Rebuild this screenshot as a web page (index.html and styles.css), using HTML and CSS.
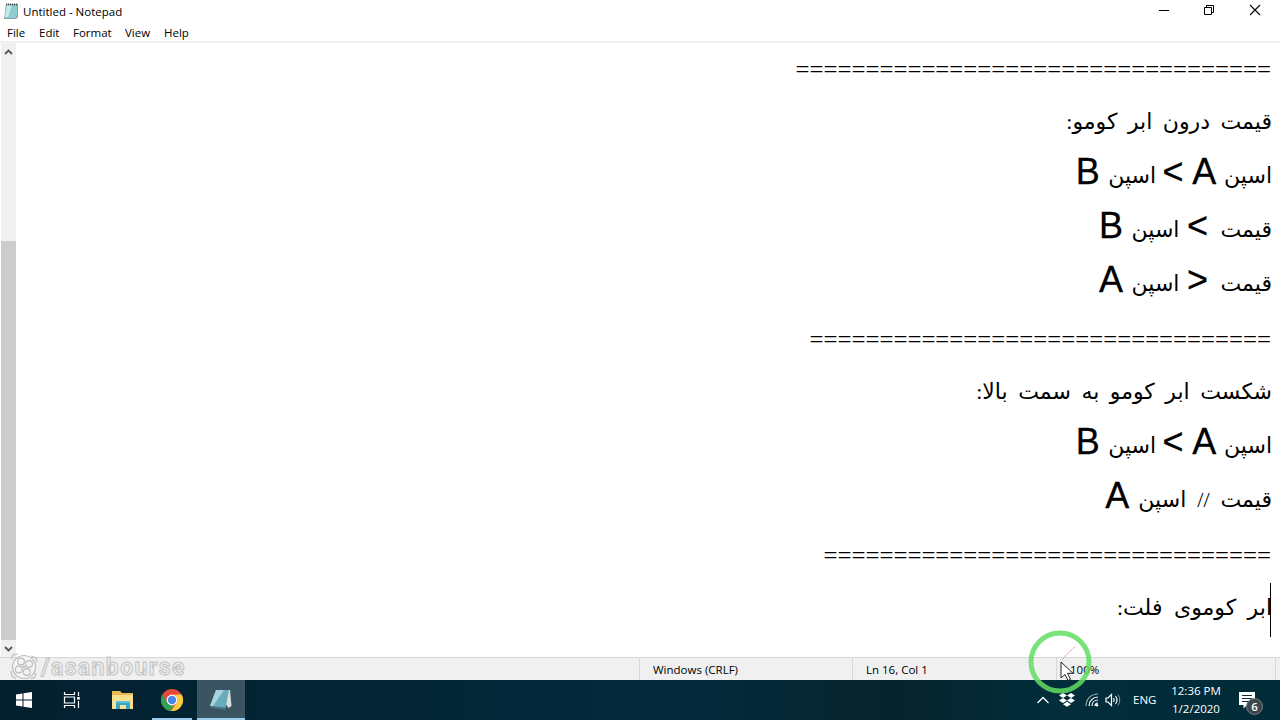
FILE: index.html
```html
<!DOCTYPE html>
<html lang="en">
<head>
    <meta charset="UTF-8">
    <meta name="viewport" content="width=device-width, initial-scale=1.0">
    <title>Untitled - Notepad</title>
    <link rel="stylesheet" href="styles.css">
</head>
<body>
    <div class="window">
        <div class="titlebar">
            <svg class="app-icon" width="16" height="18" viewBox="0 0 16 18">
                <path d="M3 2h12v13l-2 2H1z" fill="#8a9ea3"/>
                <path d="M3.500 3h10.500v11l-1.500 2H1.500z" fill="#8fcdd3"/>
                <path d="M4 3h5L5 15H2z" fill="#c3e9ea"/>
                <path d="M3 2.500h12" stroke="#45575c" stroke-width="2" stroke-dasharray="1 1"/>
            </svg>
            <span class="title">Untitled - Notepad</span>
            <div class="controls">
                <svg width="46" height="22" viewBox="0 0 46 22"><path d="M17 10.500h10" stroke="#000"/></svg>
                <svg width="46" height="22" viewBox="0 0 46 22"><path d="M16.500 7.500h7v7h-7zM18.500 7.500v-2h7v7h-2" fill="none" stroke="#000"/></svg>
                <svg width="46" height="22" viewBox="0 0 46 22"><path d="M16 5l10 10M26 5L16 15" stroke="#000" stroke-width="1.100"/></svg>
            </div>
        </div>
        <div class="menu">
            <span class="m-file">File</span>
            <span class="m-edit">Edit</span>
            <span class="m-format">Format</span>
            <span class="m-view">View</span>
            <span class="m-help">Help</span>
        </div>
        <div class="editor">
            <div class="scrollbar">
                <svg width="15" height="17" viewBox="0 0 15 17"><path d="M4 11l3.500-3.500L11 11" fill="none" stroke="#555" stroke-width="1.800"/></svg>
                <div class="thumb"></div>
                <svg width="15" height="17" viewBox="0 0 15 17"><path d="M4 7l3.500 3.500L11 7" fill="none" stroke="#555" stroke-width="1.800"/></svg>
            </div>
            <div class="text" dir="rtl" lang="fa">
                <div class="line rule">==================================</div>
                <div class="line">قیمت درون ابر کومو:</div>
                <div class="line">اسپن <b class="pair">A &gt;</b> اسپن <b>B</b></div>
                <div class="line">قیمت <b class="sign">&gt;</b> اسپن <b>B</b></div>
                <div class="line">قیمت <b class="sign">&lt;</b> اسپن <b>A</b></div>
                <div class="line rule">=================================</div>
                <div class="line">شکست ابر کومو به سمت بالا:</div>
                <div class="line">اسپن <b class="pair">A &gt;</b> اسپن <b>B</b></div>
                <div class="line slashes">قیمت // اسپن <b>A</b></div>
                <div class="line rule">================================</div>
                <div class="line last">ابر کوموی فلت:<i class="caret"></i></div>
            </div>
        </div>
        <div class="status">
            <span class="s-empty"></span>
            <span class="s-eol">Windows (CRLF)</span>
            <span class="s-pos">Ln 16, Col 1</span>
            <span class="s-zoom">100%</span>
        </div>
    </div>

    <div class="taskbar">
        <div class="task">
            <svg width="18" height="18" viewBox="0 0 18 18"><path d="M1 3.500l6.500-1v6H1zM8.500 2.300L17 1v7.500H8.500zM1 9.500h6.500v6l-6.500-1zM8.500 9.500H17V17l-8.500-1.300z" fill="#fff"/></svg>
        </div>
        <div class="task">
            <svg width="18" height="18" viewBox="0 0 18 18"><path d="M1.500 1v2.500h10V1M1.500 17v-2.500h10V17M1.500 6h10v6h-10zM15.500 1v4M15.500 10v7" fill="none" stroke="#fff" stroke-width="1.200"/><path d="M14.200 6h2.600v2.600h-2.600z" fill="#fff"/></svg>
        </div>
        <div class="task folder">
            <svg width="22" height="20" viewBox="0 0 22 20">
                <path d="M0 1h8l2 2h11v16H0z" fill="#e8b94f"/>
                <path d="M0 5h21v14H0z" fill="#fbe08d"/>
                <path d="M4 11h14v8h-4v-4H8v4H4z" fill="#35a8c9"/>
                <path d="M4 11h14v2H4z" fill="#5bc4dc"/>
            </svg>
        </div>
        <div class="task running">
            <svg width="22" height="22" viewBox="0 0 22 22">
                <circle cx="11" cy="11" r="11" fill="#e5493a"/>
                <path d="M1.500 5.500L6.300 13.800a5.500 5.500 0 0 0 6.200 2.500L10 22A11 11 0 0 1 1.500 5.500z" fill="#2fa350"/>
                <path d="M11 5.500h9.500A11 11 0 0 1 10 22l5.800-8.500A5.500 5.500 0 0 0 11 5.500z" fill="#fbcd3e"/>
                <circle cx="11" cy="11" r="5.400" fill="#fff"/>
                <circle cx="11" cy="11" r="4.200" fill="#4a86e8"/>
            </svg>
        </div>
        <div class="task running active">
            <svg width="22" height="22" viewBox="0 0 22 22">
                <path d="M6 1h14l1.500 16-3 2z" fill="#d8dedb"/>
                <path d="M6 1h13l-3.500 18L0 17z" fill="#69aabd"/>
                <path d="M6 1h8L3 17.300 0 17z" fill="#a5d3dc"/>
                <path d="M0 17l15.500 2 .5 2L2 19z" fill="#487480"/>
            </svg>
        </div>
        <div class="tray">
            <svg class="t-up" width="14" height="10" viewBox="0 0 14 10"><path d="M1.500 8L7 2.500 12.500 8" fill="none" stroke="#fff" stroke-width="1.300"/></svg>
            <svg class="t-box" width="16" height="14" viewBox="0 0 16 14"><path d="M4 0l4 2.500L4 5 0 2.500zM12 0l4 2.500L12 5 8 2.500zM4 5l4 2.500L4 10 0 7.500zM12 5l4 2.500L12 10 8 7.500zM8 8.700l4 2.500L8 13.800l-4-2.600z" fill="#fff"/></svg>
            <svg class="t-wifi" width="14" height="14" viewBox="0 0 14 14"><g fill="none" stroke="#fff" stroke-width="1.200"><path d="M1 13C1 6 6 1 13 1" opacity=".6"/><path d="M4 13c0-5 4-9 9-9M7 13c0-3.500 2.500-6 6-6M10 13c0-2 1-3 3-3"/></g><circle cx="12" cy="12.300" r="1.200" fill="#fff"/></svg>
            <svg class="t-vol" width="16" height="14" viewBox="0 0 16 14"><path d="M1 5h2L6.500 1.500v11L3 9H1zM8.500 5q1.500 2 0 4M10.500 3q3 4 0 8" fill="none" stroke="#fff" stroke-width="1.200"/><path d="M13 1.500q3.500 5.500 0 11" fill="none" stroke="#7f979f"/></svg>
            <span class="lang">ENG</span>
            <div class="clock"><span>12:36 PM</span><span>1/2/2020</span></div>
            <div class="notice">
                <svg width="17" height="17" viewBox="0 0 17 17"><path d="M0 0h16v13H8l-3.500 3.500V13H0z" fill="#fff"/><path d="M3 3.500h10M3 6.500h10M3 9.500h7" stroke="#0b2c3a"/></svg>
                <span class="badge">6</span>
            </div>
        </div>
    </div>

    <div class="watermark">
        <svg width="28" height="28" viewBox="0 0 28 28">
            <g fill="#f4f4f4" stroke="#bdbdbd" stroke-width="1.200">
                <path d="M8 1l-5 1-2 4M21 3l5 2 1 4M1 18l1 5 4 3M26 20l-1 4-4 2" fill="none"/>
                <circle cx="14" cy="14" r="11.500"/>
                <circle cx="11" cy="8.500" r="3.400"/><circle cx="19" cy="11" r="3.400"/>
                <circle cx="8.800" cy="16.500" r="3.400"/><circle cx="16.800" cy="19" r="3.400"/><circle cx="13.800" cy="13.800" r=".8"/>
            </g>
        </svg>
        <span>/asanbourse</span>
    </div>

    <!-- click highlight and mouse pointer -->
    <svg class="pointer" width="66" height="66" viewBox="0 0 66 66">
        <circle cx="33" cy="34" r="29" fill="none" stroke="#62de62" stroke-opacity=".85" stroke-width="5"/>
        <path d="M35 32l5-6 8-7" fill="none" stroke="#d9a0a0" stroke-dasharray="3 1"/>
        <path d="M34 34v16l4-3.500 3 6 2.500-1.200-3-6H46z" fill="#fff" stroke="#222"/>
    </svg>
</body>
</html>
```
FILE: styles.css
```css
body {
    margin: 0;
    width: 1280px;
    height: 720px;
    overflow: hidden;
    position: relative;
    background: #fff;
    font-family: "Open Sans", "Noto Sans", sans-serif;
    font-size: 12px;
    color: #000;
}
.window {
    height: 680px;
    display: flex;
    flex-direction: column;
}
.titlebar {
    height: 22px;
    display: flex;
    align-items: center;
}
.app-icon {
    margin: 0 4px 0 3px;
}
.title {
    font-size: 11.5px;
}
.controls {
    margin-left: auto;
    display: flex;
}
.menu {
    height: 19px;
    display: flex;
    align-items: center;
    padding-left: 7px;
    border-bottom: 2px solid #f0f0f0;
    font-size: 11.5px;
}
.menu span {
    padding-top: 1px;
}
.m-file { width: 32px; }
.m-edit { width: 34px; }
.m-format { width: 52px; }
.m-view { width: 39px; }
.editor {
    height: 614px;
    display: flex;
    overflow: hidden;
}
.scrollbar {
    width: 15px;
    margin-left: 1px;
    background: #f0f0f0;
    display: flex;
    flex-direction: column;
}
.thumb {
    height: 399px;
    margin-top: auto;
    background: #cdcdcd;
}
.text {
    flex: 1;
    padding-right: 8px;
    color: #000;
    font-family: "Liberation Serif", "DejaVu Sans", serif;
    font-size: 22px;
}
.line {
    height: 54px;
    line-height: 49px;
    white-space: nowrap;
    word-spacing: 5px;
}
.line b {
    font-family: "Liberation Sans", sans-serif;
    font-size: 36px;
    font-weight: normal;
    line-height: 1;
    word-spacing: 0;
    vertical-align: -1px;
    margin-inline-start: -2px;
    -webkit-text-stroke: 0.3px #000;
}
.line .pair {
    letter-spacing: -0.7px;
    margin-inline-end: -4px;
}
.line .sign {
    margin-inline-start: 2px;
    margin-inline-end: -3px;
}
.slashes {
    word-spacing: 5.5px;
}
.rule {
    padding-right: 1px;
    font-size: 24.8px;
    line-height: 53px;
}
.last {
    position: relative;
    word-spacing: 6px;
}
.caret {
    position: absolute;
    right: 1px;
    top: 0;
    width: 1px;
    height: 54px;
    background: #000;
}
.status {
    height: 22px;
    border-top: 1px solid #d7d7d7;
    background: #f0f0f0;
    display: flex;
    line-height: 24px;
    font-size: 11.5px;
}
.status span {
    box-sizing: border-box;
    border-right: 1px solid #d7d7d7;
    padding-left: 13px;
}
.s-empty { width: 640px; }
.s-eol { width: 213px; }
.s-pos { width: 204px; }
.status .s-zoom { width: 219px; }
.taskbar {
    height: 40px;
    display: flex;
    background: linear-gradient(90deg, #03202f, #032a3c 55%, #06232b 70%, #022d3b 82%, #022b38);
    color: #fff;
}
.task {
    width: 48px;
    box-sizing: border-box;
    display: flex;
    align-items: center;
    justify-content: center;
}
.folder { margin: 0 2px 0 3px; }
.running {
    width: 40px;
    padding-top: 2px;
    border-bottom: 2px solid #9dcbee;
    margin-left: 3px;
}
.active {
    width: 48px;
    margin-left: 5px;
    background: #3a5461;
}
.tray {
    margin-left: auto;
    display: flex;
    align-items: center;
    font-size: 11.5px;
}
.t-up { margin-right: 9px; }
.t-box { margin-right: 10px; }
.t-wifi { margin-right: 6px; }
.t-vol { margin-right: 12px; }
.lang {
    width: 28px;
    padding-bottom: 1px;
}
.clock {
    width: 70px;
    display: flex;
    flex-direction: column;
    align-items: center;
    line-height: 18px;
    margin-bottom: 1px;
}
.notice {
    position: relative;
    width: 49px;
    height: 17px;
    padding-left: 8px;
    box-sizing: border-box;
}
.badge {
    position: absolute;
    left: 15px;
    top: 6px;
    width: 17px;
    height: 17px;
    border-radius: 50%;
    background: #3c464b;
    border: 1px solid #718087;
    box-sizing: border-box;
    text-align: center;
    font-weight: 600;
    line-height: 15px;
}
.watermark {
    position: absolute;
    left: 10px;
    top: 649px;
    display: flex;
    align-items: center;
    gap: 3px;
    font: bold 23px/32px Roboto, "Liberation Sans", sans-serif;
    letter-spacing: 1.4px;
    color: #ececec;
    -webkit-text-stroke: 1px #c4c4c4;
}
.watermark span {
    padding-top: 3px;
}
.pointer {
    position: absolute;
    left: 1027px;
    top: 628px;
}
```
